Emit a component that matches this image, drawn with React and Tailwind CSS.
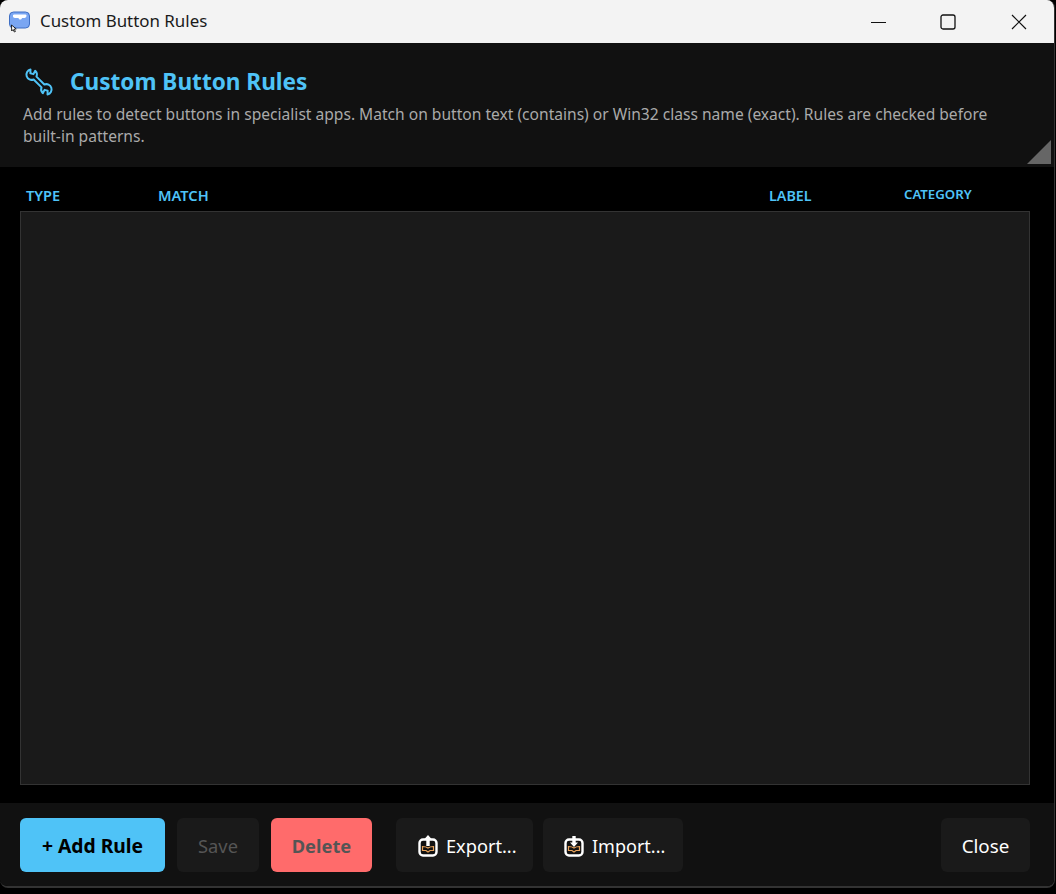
const FONT = "font-['Noto_Sans','Open_Sans',sans-serif]";

function AppIcon() {
  return (
    <svg width="24" height="24" viewBox="0 0 24 24" className="shrink-0">
      <rect x="1.500" y="2" width="20" height="16" rx="4" fill="#7aa6f2" stroke="#3f6fc4" />
      <path d="M6 4.500h11.500c1.500 0 1.500 3-1 3.500h-2.500c-.5 2-3 2-3.500 0H7C4.500 8 4.500 4.500 6 4.500z" fill="#fff" />
      <path d="M3.500 15l.2 6 1.400-1.400 1.300 2.400 1-.5-1.200-2.400 2-.2z" fill="#fff" stroke="#111" strokeWidth="0.9" />
    </svg>
  );
}

function WrenchIcon() {
  return (
    <svg width="30" height="30" viewBox="0 0 30 30" fill="none" stroke="#4fc3f7" strokeWidth="2.500" strokeLinejoin="round" className="shrink-0">
      <g transform="translate(15 15) rotate(45) scale(0.8)">
        <path d="M7 -2.500A6.500 6.500 0 1 1 18.510 3.440L15.330 .04L11.870 2.040L13.230 6.500A6.500 6.500 0 0 1 7 2.500L-7 2.500A6.500 6.500 0 1 1 -18.510 -3.440L-15.330 -.04L-11.870 -2.040L-13.230 -6.500A6.500 6.500 0 0 1 -7 -2.500Z" />
      </g>
    </svg>
  );
}

function TrayIcon({ up }) {
  return (
    <svg width="20" height="22" viewBox="0 0 20 22" fill="none" className="shrink-0">
      <rect x="1.500" y="4.500" width="17" height="16" rx="3.500" fill="#111" stroke="#fff" strokeWidth="2.400" />
      <path d="M4.500 11.500c2 0 4 .5 5.500 1.500 1.500-1 3.500-1.500 5.500-1.500v4h-3.500l-2 1.500-2-1.500H4.500z" stroke="#e8a25a" strokeWidth="1.200" />
      {up ? (
        <path d="M10 0l4 4.500h-2.300V11H8.300V4.500H6z" fill="#fff" />
      ) : (
        <path d="M8.300 1h3.400v6.500H14L10 12 6 7.500h2.300z" fill="#fff" />
      )}
    </svg>
  );
}

export default function App() {
  return (
    <div className={`${FONT} w-[1056px] h-[894px] bg-black overflow-hidden`}>
      <div className="w-[1055px] h-[888px] flex flex-col bg-black border-b-2 border-r border-[#333] rounded-b-lg rounded-t-lg overflow-hidden">
        <div className="h-[43px] shrink-0 bg-[#f3f3f3] flex items-center pl-[8px]">
          <AppIcon />
          <span className="ml-[8px] pb-[1px] text-[16.900px] text-[#1a1a1a]">Custom Button Rules</span>
          <div className="ml-auto flex items-center">
            <svg width="16" height="16" viewBox="0 0 16 16" className="mr-[53px]" stroke="#111" strokeWidth="1">
              <path d="M0 8.500h15" />
            </svg>
            <svg width="16" height="16" viewBox="0 0 16 16" className="mr-[55px]" fill="none" stroke="#111" strokeWidth="1.300">
              <rect x="1" y="1" width="14" height="14" rx="2" />
            </svg>
            <svg width="16" height="16" viewBox="0 0 16 16" className="mr-[27px]" stroke="#111" strokeWidth="1.200">
              <path d="M1 1l14 14M15 1L1 15" />
            </svg>
          </div>
        </div>

        <div className="relative h-[124px] shrink-0 bg-[#111] px-[23px] pt-[22px]">
          <div className="flex items-center gap-[16px] h-[34px] pl-[1px]">
            <WrenchIcon />
            <h1 className="text-[22.600px] font-bold text-[#4fc3f7]">Custom Button Rules</h1>
          </div>
          <p className="mt-[4px] w-[985px] text-[15.580px] leading-[22px] text-[#aaa]">
            Add rules to detect buttons in specialist apps. Match on button text (contains) or Win32 class name (exact). Rules are checked before built-in patterns.
          </p>
          <div className="absolute right-[3px] bottom-[3px] w-[24px] h-[24px] bg-[#666] [clip-path:polygon(100%_0,100%_100%,0_100%)]" />
        </div>

        <div className="flex-1 min-h-0 flex flex-col px-[20px] pt-[16px] pb-[18px]">
          <div className="flex h-[28px] shrink-0 pl-[6px] text-[14.600px] font-semibold text-[#4fc3f7]">
            <span className="w-[132px] pt-[2px]">TYPE</span>
            <span className="w-[611px] pt-[2px]">MATCH</span>
            <span className="w-[135px] pt-[2px] text-[14.300px]">LABEL</span>
            <span className="text-[13.200px] pt-[2px]">CATEGORY</span>
          </div>
          <div className="flex-1 w-[1010px] bg-[#1a1a1a] border border-[#333]" />
        </div>

        <div className="h-[83px] shrink-0 bg-[#111] flex items-start pt-[15px] pl-[20px] pr-[24px]">
          <button className="w-[145px] h-[54px] pt-[3px] rounded-md bg-[#4fc3f7] text-[19.300px] font-bold text-black">+ Add Rule</button>
          <button className="ml-[12px] w-[82px] h-[54px] pt-[1px] rounded-md bg-[#1a1a1a] text-[18.300px] text-[#555]">Save</button>
          <button className="ml-[12px] w-[101px] h-[54px] pt-[1px] rounded-md bg-[#ff6b6b] text-[18.300px] font-bold text-[#555]">Delete</button>
          <button className="ml-[24px] w-[137px] h-[54px] pt-[1px] pl-[22px] rounded-md bg-[#1a1a1a] text-[18.200px] text-white flex items-center gap-[8px]">
            <TrayIcon up />
            <span className="pt-[2px]">Export...</span>
          </button>
          <button className="ml-[10px] w-[140px] h-[54px] pt-[1px] pl-[21px] rounded-md bg-[#1a1a1a] text-[18px] text-white flex items-center gap-[8px]">
            <TrayIcon />
            <span className="pt-[2px]">Import...</span>
          </button>
          <button className="ml-auto w-[89px] h-[54px] pt-[2px] rounded-md bg-[#1a1a1a] text-[18.800px] text-white">Close</button>
        </div>
      </div>
    </div>
  );
}
